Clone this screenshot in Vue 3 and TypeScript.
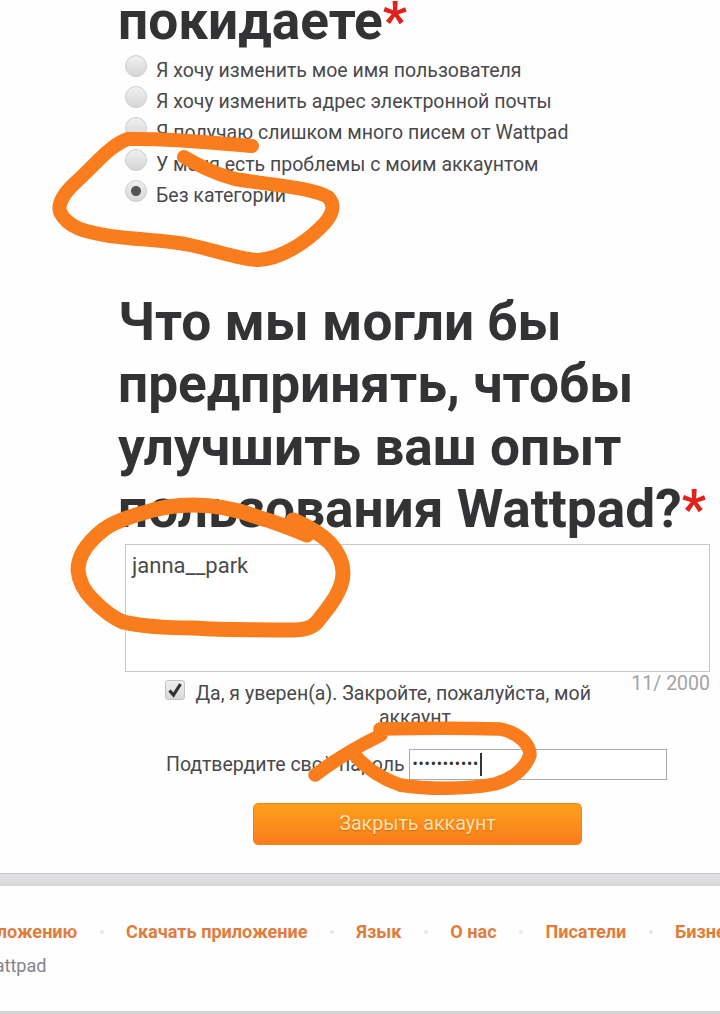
<script setup lang="ts">
const reasons: { label: string; checked?: boolean }[] = [
  { label: 'Я хочу изменить мое имя пользователя' },
  { label: 'Я хочу изменить адрес электронной почты' },
  { label: 'Я получаю слишком много писем от Wattpad' },
  { label: 'У меня есть проблемы с моим аккаунтом' },
  { label: 'Без категории', checked: true },
]
const links: string[] = ['Приложению', 'Скачать приложение', 'Язык', 'О нас', 'Писатели', 'Бизнес']
</script>

<template>
  <div class="page">
    <main class="form">
      <h2 class="title first">покидаете<span class="req">*</span></h2>
      <ul class="reasons">
        <li v-for="r in reasons" :key="r.label" class="reason">
          <input type="radio" name="reason" class="radio" :checked="r.checked" />
          <span>{{ r.label }}</span>
        </li>
      </ul>

      <h2 class="title second">Что мы могли бы предпринять, чтобы улучшить ваш опыт пользования Wattpad?<span class="req">*</span></h2>
      <div class="textbox">janna__park</div>

      <div class="confirm">
        <span class="counter">11/ 2000</span>
        <span class="check">
          <svg viewBox="0 0 20 20" width="20" height="20"><path d="M4.5 10.5l4 4.5 7-11" fill="none" stroke="#333" stroke-width="3.2" /></svg>
        </span>Да, я уверен(а). Закройте, пожалуйста, мой аккаунт.
      </div>

      <div class="password">
        <label class="pw-label">Подтвердите свой пароль</label>
        <div class="pw-input"><span class="dots">•••••••••••</span><span class="caret"></span></div>
      </div>

      <button class="close-btn" type="button">Закрыть аккаунт</button>
    </main>

    <footer class="footer">
      <div class="band"></div>
      <nav class="links">
        <template v-for="(l, i) in links" :key="l">
          <span v-if="i > 0" class="dot"></span>
          <a class="link">{{ l }}</a>
        </template>
      </nav>
      <div class="copy">© 2018 Wattpad</div>
      <div class="band-bottom"></div>
    </footer>

    <svg class="scribbles" viewBox="0 0 720 1014" width="720" height="1014" fill="none" stroke="#f97d1c" stroke-linecap="round" stroke-linejoin="round">
      <path stroke-width="14" d="M252 146C215 143 170 138 128 139C110 145 95 165 75 183C62 195 58 205 60 212C68 228 85 232 110 236C140 240 165 240 190 245C215 250 240 260 258 260C280 259 305 243 320 228C333 216 336 205 328 197C310 187 270 185 235 179C215 174 200 166 184 157" />
      <path stroke-width="15" d="M307 535C290 528 275 522 260 518C240 510 215 505 193 505C175 505 158 508 143 513C125 518 112 523 103 530C88 542 78 555 78 570C79 582 85 592 93 600C103 610 113 618 123 622C145 627 170 628 193 628C225 630 260 630 293 630C305 630 312 628 317 622C330 606 343 590 343 573C343 562 338 552 330 543C320 533 307 526 293 520" />
      <path stroke-width="13.5" d="M315 775C335 760 358 746 381 735L380 729C420 728 470 728 500 729C520 733 530 745 530 755C525 770 510 780 495 784C465 790 425 789 400 785C380 778 365 768 352 752" />
    </svg>
  </div>
</template>

<style>
html, body { margin: 0; background: #fff; }
</style>

<style scoped>
.page {
  position: relative;
  width: 720px;
  height: 1014px;
  overflow: hidden;
  background: #fffeff;
  font-family: Roboto, "Liberation Sans", sans-serif;
  color: #444;
}
.form { padding: 0 10px 0 118px; }
.title {
  margin: 0;
  font-size: 53.2px;
  line-height: 62.5px;
  font-weight: 700;
  color: #333336;
}
.first { margin-top: -10px; }
.req { color: #e3211c; }
.reasons { list-style: none; margin: 0; padding: 2px 0 0 7px; }
.reason {
  display: flex;
  align-items: center;
  gap: 9px;
  height: 31.3px;
  font-size: 19.5px;
  color: #49494b;
}
.radio {
  appearance: none;
  width: 22px;
  height: 22px;
  margin: -9px 0 0;
  border-radius: 50%;
  border: 1px solid #ccc;
  background: linear-gradient(#f0f0f0, #d6d6d6);
  box-sizing: border-box;
  flex: none;
}
.radio:checked {
  background: radial-gradient(circle, #555 0 4.5px, transparent 5.5px), linear-gradient(#f0f0f0, #d6d6d6);
}
.second { margin-top: 80px; width: 592px; }
.textbox {
  box-sizing: border-box;
  width: 585px;
  height: 128px;
  margin: 3px 0 0 7px;
  padding: 8px 6px;
  border: 1px solid #c8c8ca;
  font-size: 22px;
  line-height: 26px;
  color: #4a4a4a;
  background: #fff;
}
.confirm {
  margin: 8px 0 0 7px;
  width: 585px;
  font-size: 19.5px;
  line-height: 24px;
  text-align: center;
  color: #49494b;
}
.counter {
  float: right;
  margin-top: -8px;
  font-size: 19.5px;
  line-height: 23px;
  color: #a3a3a6;
}
.check {
  box-sizing: border-box;
  display: inline-flex;
  align-items: center;
  justify-content: center;
  width: 20px;
  height: 20px;
  margin-right: 10px;
  border: 1px solid #c4c4c4;
  border-radius: 3px;
  background: linear-gradient(#f0f0f0, #d8d8d8);
  vertical-align: 0;
}
.check svg { flex: none; }
.password {
  display: flex;
  align-items: center;
  margin: 19px 0 0 48px;
}
.pw-label {
  width: 243px;
  font-size: 19.5px;
  color: #49494b;
  white-space: nowrap;
}
.pw-input {
  box-sizing: border-box;
  width: 258px;
  height: 31px;
  border: 1px solid #aaa;
  background: #fff;
  display: flex;
  align-items: center;
  padding-left: 3px;
}
.dots { font-size: 12px; font-family: "Liberation Sans", sans-serif; letter-spacing: 1.85px; color: #333; }
.caret { width: 2px; height: 23px; background: #333; }
.close-btn {
  display: block;
  box-sizing: border-box;
  width: 329px;
  height: 42px;
  margin: 23px 0 0 135px;
  border: 1px solid #e6861e;
  border-radius: 5px;
  background: linear-gradient(#fca01a, #fb7c1d);
  color: #fde0b0;
  font-family: inherit;
  font-size: 19.6px;
  text-shadow: 0 1px 1px rgba(150, 80, 0, .5);
}
.footer { margin-top: 28px; }
.band {
  height: 13px;
  border-top: 1px solid #c5c5c8;
  box-sizing: border-box;
  background: linear-gradient(#e2e2e5, #d8d8db);
}
.links {
  display: flex;
  align-items: center;
  gap: 22.9px;
  margin: 34px 0 0 -36.5px;
  width: 800px;
  font-size: 18.1px;
  line-height: 24px;
  font-weight: 700;
  color: #e17d3c;
  white-space: nowrap;
}
.dot { width: 4px; height: 4px; border-radius: 50%; background: #e8e8ea; flex: none; margin: 0 -0.5px; }
.copy {
  margin: 10px 0 0 -85px;
  font-size: 18.1px;
  line-height: 24px;
  color: #848487;
  white-space: nowrap;
}
.band-bottom { height: 4px; margin-top: 33px; background: #d2d2d5; }
.scribbles { position: absolute; left: 0; top: 0; pointer-events: none; }
</style>
